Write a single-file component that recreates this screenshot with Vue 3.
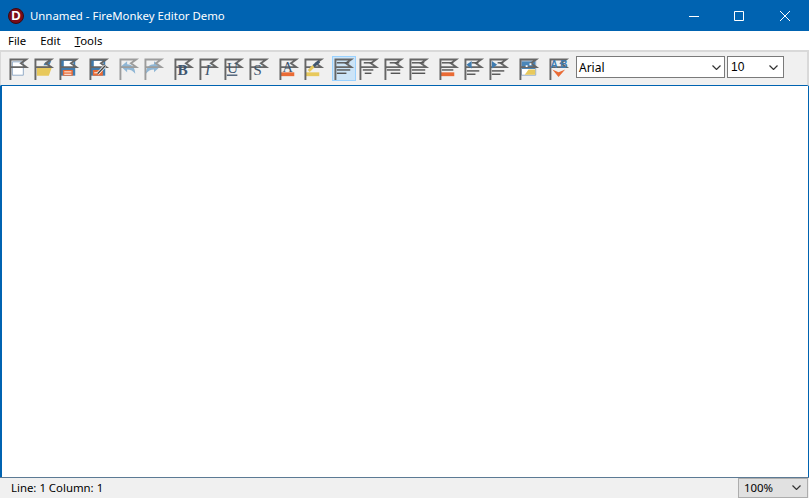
<script setup>
const BLUE = '#3f7cb0'
const ORANGE = '#ea6b35'
const YELLOW = '#e8c95c'

const lines = (rows) => rows.map(([x1, x2, y]) => ({ d: `M${x1} ${y}H${x2}`, stroke: '#555', w: 1.5 }))
const bar = (color) => [{ d: 'M2 15.5H16V19.5H2Z', fill: color }]
const disk = [
  { d: 'M1.5 2H17V19H1.5Z', fill: BLUE },
  { d: 'M5 3.5H15V10.5H5Z', fill: '#fff' },
  { d: 'M4 13H14.5V19H4Z', fill: ORANGE },
]

const groups = [
  [
    {
      name: 'new',
      before: [
        { d: 'M3.5 4.5H15V18.5H3.5Z', fill: '#fff', stroke: '#8fa8c4' },
      ],
    },
    {
      name: 'open',
      before: [
        { d: 'M3 9.5H19L15.5 19H3Z', fill: YELLOW },
        { d: 'M10 8C11 5 14 3 18 4L16 8Z', fill: '#4a80ad' },
      ],
    },
    {
      name: 'save',
      before: [...disk, { d: 'M5.5 15H13M5.5 17.5H13', stroke: '#fff' }],
    },
  ],
  [
    {
      name: 'save-as',
      before: [...disk, { d: 'M5.5 16H10', stroke: '#fff' }],
      after: [
        { d: 'M9 17L17 8.5', stroke: '#fff', w: 3 },
        { d: 'M9 17L17 8.5', stroke: '#444', w: 1.5 },
      ],
    },
  ],
  [
    {
      name: 'undo',
      off: true,
      before: [{ d: 'M2 9.5L8.5 4V7C13 7 17 10 17 17C15 14 12 12.5 8.5 12.5V15.5Z', fill: '#4f90c4' }],
    },
    {
      name: 'redo',
      off: true,
      before: [{ d: 'M17 9.5L10.5 4V7C6 7 2 10 2 17C4 14 7 12.5 10.5 12.5V15.5Z', fill: '#4f90c4' }],
    },
  ],
  [
    { name: 'bold', letter: 'B', cls: 'bold' },
    { name: 'italic', letter: 'I', cls: 'italic' },
    { name: 'underline', letter: 'U', cls: 'under', after: [{ d: 'M3 18.5H14', stroke: '#40566f', w: 1.4 }] },
    { name: 'strike', letter: 'S', cls: 'plain' },
  ],
  [
    { name: 'color', letter: 'A', cls: 'small', before: bar(ORANGE) },
    {
      name: 'highlight',
      before: bar(YELLOW),
      after: [
        { d: 'M5 14L10 9', stroke: YELLOW, w: 3 },
        { d: 'M10 9L16 4', stroke: '#40566f', w: 3 },
      ],
    },
  ],
  [
    { name: 'left', on: true, after: lines([[3, 16, 5.5], [3, 17, 13], [3, 13, 16.5]]) },
    { name: 'center', after: lines([[5, 14, 5.5], [4, 15, 13], [6, 13, 16.5]]) },
    { name: 'right', after: lines([[6, 16, 5.5], [3, 17, 13], [7, 17, 16.5]]) },
    { name: 'justify', after: lines([[3, 16, 5.5], [3, 17, 13], [3, 17, 16.5]]) },
  ],
  [
    { name: 'list', before: bar(ORANGE), after: lines([[3, 15, 5.5], [3, 15, 13]]) },
    {
      name: 'outdent',
      after: [
        ...lines([[3, 16, 14], [3, 12, 17.5], [8, 15, 5.5]]),
        { d: 'M2.5 7.5L8 3.5V11.5Z', fill: BLUE },
      ],
    },
    {
      name: 'indent',
      after: [
        ...lines([[3, 16, 14], [3, 12, 17.5], [9, 15, 5.5]]),
        { d: 'M8.5 7.5L3 3.5V11.5Z', fill: BLUE },
      ],
    },
  ],
  [
    {
      name: 'image',
      before: [
        { d: 'M2.5 3.5H17.5V18.5H2.5Z', fill: '#fff', stroke: '#8fa8c4' },
        { d: 'M3 4H17V12H3Z', fill: '#4a86b8' },
        { d: 'M10 12.5H17V18H6Z', fill: YELLOW },
      ],
      after: [{ d: 'M7 8H9V10H7ZM11 6H13V8H11Z', fill: '#fff' }],
    },
  ],
  [
    {
      name: 'spell',
      letter: 'A B',
      cls: 'spell',
      after: [{ d: 'M3.5 12.5L10 20.5L17 12.5L10 15.5Z', fill: ORANGE }],
    },
  ],
]
</script>

<template>
  <div class="window">
    <header class="titlebar">
      <span class="app-icon">D</span>
      <span class="title">Unnamed - FireMonkey Editor Demo</span>
      <div class="controls">
        <button class="ctl min">
          <svg width="10" height="10" viewBox="0 0 10 10"><path d="M0 5.5H10" stroke="#fff" /></svg>
        </button>
        <button class="ctl">
          <svg width="10" height="10" viewBox="0 0 10 10"><path d="M.5 .5H9.5V9.5H.5Z" fill="none" stroke="#fff" /></svg>
        </button>
        <button class="ctl">
          <svg width="10" height="10" viewBox="0 0 10 10"><path d="M0 0L10 10M10 0L0 10" stroke="#fff" /></svg>
        </button>
      </div>
    </header>

    <nav class="menu">
      <span>File</span>
      <span>Edit</span>
      <span><u>T</u>ools</span>
    </nav>

    <div class="toolbar">
      <div v-for="(group, i) in groups" :key="i" class="group">
        <button
          v-for="item in group"
          :key="item.name"
          class="tool"
          :class="{ on: item.on, off: item.off }"
          :title="item.name"
        >
          <svg width="22" height="24" viewBox="0 0 22 24">
            <path
              v-for="(p, n) in item.before"
              :key="n"
              :d="p.d"
              :fill="p.fill || 'none'"
              :stroke="p.stroke || 'none'"
              :stroke-width="p.w || 1"
            />
            <path class="flag" d="M1.5 23.5V2H18L12.5 6L18 10H1.5" />
            <text v-if="item.letter" class="glyph" :class="item.cls" x="9" y="18">{{ item.letter }}</text>
            <path
              v-for="(p, n) in item.after"
              :key="'a' + n"
              :d="p.d"
              :fill="p.fill || 'none'"
              :stroke="p.stroke || 'none'"
              :stroke-width="p.w || 1"
            />
          </svg>
        </button>
      </div>
      <div class="combo font">
        <span>Arial</span>
        <svg width="9" height="5" viewBox="0 0 9 5"><path d="M.5 .5L4.5 4.5L8.5 .5" fill="none" stroke="#333" stroke-width="1.2" /></svg>
      </div>
      <div class="combo size">
        <span>10</span>
        <svg width="9" height="5" viewBox="0 0 9 5"><path d="M.5 .5L4.5 4.5L8.5 .5" fill="none" stroke="#333" stroke-width="1.2" /></svg>
      </div>
    </div>

    <main class="editor"></main>

    <footer class="status">
      <span class="pos">Line: 1 Column: 1</span>
      <div class="zoom">
        <span>100%</span>
        <svg width="9" height="5" viewBox="0 0 9 5"><path d="M.5 .5L4.5 4.5L8.5 .5" fill="none" stroke="#333" stroke-width="1.2" /></svg>
      </div>
    </footer>
  </div>
</template>

<style scoped>
.window {
  width: 809px;
  height: 498px;
  display: flex;
  flex-direction: column;
  background: #fff;
  font-family: "Noto Sans", "Open Sans", sans-serif;
  font-size: 11.4px;
  color: #000;
  overflow: hidden;
}

.titlebar {
  height: 31px;
  background: #0063b1;
  display: flex;
  align-items: center;
  color: #fff;
  flex: none;
}

.app-icon {
  width: 16px;
  height: 16px;
  margin-left: 8px;
  border-radius: 50%;
  background: #7a0c18;
  border: 1px solid #3b0a10;
  box-sizing: border-box;
  display: flex;
  align-items: center;
  justify-content: center;
  font: bold 13px "Liberation Sans", sans-serif;
}

.title {
  margin-left: 6px;
}

.controls {
  margin-left: auto;
  margin-right: 1px;
  display: flex;
}

.ctl {
  width: 46px;
  height: 31px;
  padding: 0;
  border: 0;
  background: none;
  display: flex;
  align-items: center;
  justify-content: center;
}

.ctl.min {
  width: 44px;
}

.menu {
  height: 19px;
  flex: none;
  display: flex;
  gap: 14px;
  align-items: center;
  padding-left: 8px;
}

.toolbar {
  height: 36px;
  flex: none;
  box-sizing: border-box;
  display: flex;
  align-items: center;
  padding: 0 0 0 6px;
  background: #f0f0f0;
  border-top: 2px solid #d9d9d9;
  border-left: 1px solid #d9d9d9;
  border-right: 2px solid #d9d9d9;
  border-bottom: 1px solid #0063b1;
}

.group {
  display: flex;
  margin-right: 5px;
}

.tool {
  width: 24px;
  height: 25px;
  margin-right: 1px;
  box-sizing: border-box;
  padding: 0 0 0 1px;
  border: 1px solid transparent;
  background: none;
  display: flex;
  align-items: center;
}

.tool.on {
  background: #cce4f7;
  border-color: #99d1ff;
}

.tool.off {
  opacity: 0.6;
}

.flag {
  fill: none;
  stroke: #666;
  stroke-width: 2;
}

.glyph {
  font-family: "Liberation Serif", serif;
  font-size: 16px;
  text-anchor: middle;
  fill: #40566f;
}

.glyph.bold {
  font-weight: bold;
}

.glyph.italic {
  font-style: italic;
}

.glyph.small {
  font-size: 15px;
  transform: translateY(-3px);
}

.glyph.under {
  transform: translateY(-2px);
}

.glyph.spell {
  font-family: "Liberation Sans", sans-serif;
  font-size: 10.5px;
  font-weight: bold;
  fill: #3f7cb0;
  transform: translate(1.5px, -7px);
}

.combo {
  height: 22px;
  margin-bottom: 3px;
  box-sizing: border-box;
  background: #fff;
  border: 1px solid #7a7a7a;
  display: flex;
  align-items: center;
  justify-content: space-between;
  padding: 0 3px 0 2px;
}

.font {
  width: 149px;
  margin-left: -1px;
  font-size: 12px;
}

.size {
  width: 57px;
  margin-left: 2px;
  padding: 0 5px 0 3px;
  font-family: "Liberation Sans", sans-serif;
  font-size: 12px;
}

.editor {
  flex: 1;
  border-left: 2px solid #0063b1;
  border-right: 1px solid #0063b1;
}

.status {
  height: 21px;
  flex: none;
  box-sizing: border-box;
  display: flex;
  align-items: stretch;
  background: #f0f0f0;
  border-top: 1px solid #5c7a94;
}

.pos {
  padding: 0 0 2px 11px;
  align-self: center;
}

.zoom {
  margin-left: auto;
  margin-right: 1px;
  width: 70px;
  box-sizing: border-box;
  background: #e1e1e1;
  border: 1px solid #adadad;
  display: flex;
  align-items: center;
  justify-content: space-between;
  padding: 0 6px 1px 5px;
}
</style>

<style>
html,
body {
  margin: 0;
  background: #fff;
}
</style>
